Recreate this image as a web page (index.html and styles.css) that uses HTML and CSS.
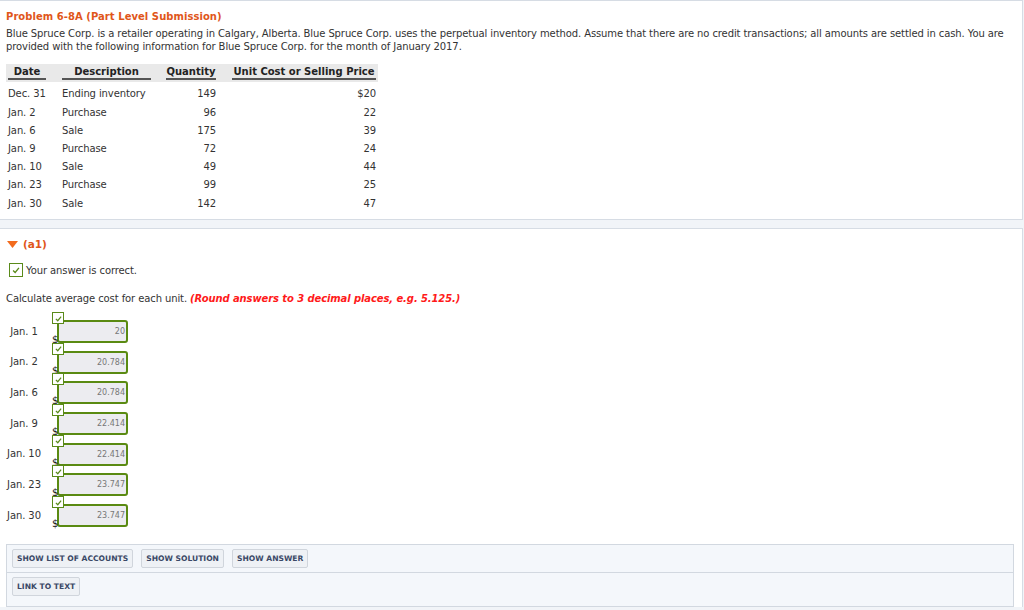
FILE: index.html
```html
<!DOCTYPE html>
<html>
<head>
<meta charset="utf-8">
<link rel="stylesheet" href="styles.css">
</head>
<body>
<div class="page">
  <section class="panel problem">
    <h1 class="title">Problem 6-8A (Part Level Submission)</h1>
    <p class="desc">Blue Spruce Corp. is a retailer operating in Calgary, Alberta. Blue Spruce Corp. uses the perpetual inventory method. Assume that there are no credit transactions; all amounts are settled in cash. You are provided with the following information for Blue Spruce Corp. for the month of January 2017.</p>
    <table class="data">
      <colgroup>
        <col class="w-date"><col class="w-desc"><col class="w-qty"><col class="w-cost">
      </colgroup>
      <thead>
        <tr>
          <th class="c1"><span>Date</span></th>
          <th class="c2"><span>Description</span></th>
          <th class="c3"><span>Quantity</span></th>
          <th class="c4"><span>Unit Cost or Selling Price</span></th>
        </tr>
      </thead>
      <tbody>
        <tr><td class="c1">Dec. 31</td><td class="c2">Ending inventory</td><td class="c3 num">149</td><td class="c4 num">$20</td></tr>
        <tr><td class="c1">Jan. 2</td><td class="c2">Purchase</td><td class="c3 num">96</td><td class="c4 num">22</td></tr>
        <tr><td class="c1">Jan. 6</td><td class="c2">Sale</td><td class="c3 num">175</td><td class="c4 num">39</td></tr>
        <tr><td class="c1">Jan. 9</td><td class="c2">Purchase</td><td class="c3 num">72</td><td class="c4 num">24</td></tr>
        <tr><td class="c1">Jan. 10</td><td class="c2">Sale</td><td class="c3 num">49</td><td class="c4 num">44</td></tr>
        <tr><td class="c1">Jan. 23</td><td class="c2">Purchase</td><td class="c3 num">99</td><td class="c4 num">25</td></tr>
        <tr><td class="c1">Jan. 30</td><td class="c2">Sale</td><td class="c3 num">142</td><td class="c4 num">47</td></tr>
      </tbody>
    </table>
  </section>

  <section class="panel part">
    <div class="part-head">
      <svg class="tri" width="11" height="7" viewBox="0 0 11 7"><polygon points="0,0 11,0 5.5,7" fill="#f26b1d"/></svg>
      <span>(a1)</span>
    </div>
    <div class="correct">
      <span class="chk big"><svg viewBox="0 0 12 12" width="10" height="10"><polyline points="2.5,6.5 5,9 9.5,3.5" fill="none" stroke="#5a8a1a" stroke-width="1.6"/></svg></span>
      <span>Your answer is correct.</span>
    </div>
    <p class="instr">Calculate average cost for each unit. <em>(Round answers to 3 decimal places, e.g. 5.125.)</em></p>

    <div class="answers">
      <div class="arow"><span class="alabel">Jan. 1</span><span class="acell"><span class="chk small"><svg viewBox="0 0 12 12" width="9" height="9"><polyline points="2.5,6.5 5,9 9.5,3.5" fill="none" stroke="#5a8a1a" stroke-width="1.6"/></svg></span><span class="dollar">$</span><span class="ainput">20</span></span></div>
      <div class="arow"><span class="alabel">Jan. 2</span><span class="acell"><span class="chk small"><svg viewBox="0 0 12 12" width="9" height="9"><polyline points="2.5,6.5 5,9 9.5,3.5" fill="none" stroke="#5a8a1a" stroke-width="1.6"/></svg></span><span class="dollar">$</span><span class="ainput">20.784</span></span></div>
      <div class="arow"><span class="alabel">Jan. 6</span><span class="acell"><span class="chk small"><svg viewBox="0 0 12 12" width="9" height="9"><polyline points="2.5,6.5 5,9 9.5,3.5" fill="none" stroke="#5a8a1a" stroke-width="1.6"/></svg></span><span class="dollar">$</span><span class="ainput">20.784</span></span></div>
      <div class="arow"><span class="alabel">Jan. 9</span><span class="acell"><span class="chk small"><svg viewBox="0 0 12 12" width="9" height="9"><polyline points="2.5,6.5 5,9 9.5,3.5" fill="none" stroke="#5a8a1a" stroke-width="1.6"/></svg></span><span class="dollar">$</span><span class="ainput">22.414</span></span></div>
      <div class="arow"><span class="alabel">Jan. 10</span><span class="acell"><span class="chk small"><svg viewBox="0 0 12 12" width="9" height="9"><polyline points="2.5,6.5 5,9 9.5,3.5" fill="none" stroke="#5a8a1a" stroke-width="1.6"/></svg></span><span class="dollar">$</span><span class="ainput">22.414</span></span></div>
      <div class="arow"><span class="alabel">Jan. 23</span><span class="acell"><span class="chk small"><svg viewBox="0 0 12 12" width="9" height="9"><polyline points="2.5,6.5 5,9 9.5,3.5" fill="none" stroke="#5a8a1a" stroke-width="1.6"/></svg></span><span class="dollar">$</span><span class="ainput">23.747</span></span></div>
      <div class="arow"><span class="alabel">Jan. 30</span><span class="acell"><span class="chk small"><svg viewBox="0 0 12 12" width="9" height="9"><polyline points="2.5,6.5 5,9 9.5,3.5" fill="none" stroke="#5a8a1a" stroke-width="1.6"/></svg></span><span class="dollar">$</span><span class="ainput">23.747</span></span></div>
    </div>

    <div class="toolbox">
      <div class="trow">
        <span class="btn">SHOW LIST OF ACCOUNTS</span>
        <span class="btn">SHOW SOLUTION</span>
        <span class="btn">SHOW ANSWER</span>
      </div>
      <div class="trow last">
        <span class="btn">LINK TO TEXT</span>
      </div>
    </div>
  </section>
</div>
</body>
</html>
```

FILE: styles.css
```css
* { box-sizing: border-box; }
html, body { margin: 0; padding: 0; }
body {
  background: #f1f4f8;
  font-family: "DejaVu Sans", Verdana, sans-serif;
  font-size: 10px;
  letter-spacing: -0.1px;
  color: #333;
  width: 1024px;
  height: 610px;
  overflow: hidden;
}
.page {
  display: flex;
  flex-direction: column;
  gap: 8px;
}
.panel {
  background: #fff;
  border: 1px solid #d6dce4;
  border-left: none;
  width: 1023px;
}
.problem {
  padding: 9px 6px 8px 6px;
  height: 220px;
}
.title {
  margin: 0;
  font-size: 10px;
  font-weight: bold;
  color: #e0561a;
  line-height: 14px;
  letter-spacing: 0.05px;
}
.desc {
  margin: 3px 0 0 0;
  line-height: 13px;
  color: #333;
}
.data {
  border-collapse: collapse;
  table-layout: fixed;
  width: 372px;
  margin-top: 11px;
  white-space: nowrap;
}
.w-date { width: 50px; }
.w-desc { width: 101px; }
.w-qty { width: 63px; }
.w-cost { width: 158px; }
.data thead tr { background: #e9e9e9; }
.data th {
  font-weight: bold;
  padding-top: 2px;
  padding-bottom: 2px;
  height: 17px;
  color: #222;
  letter-spacing: 0;
}
.data th span {
  display: block;
  border-bottom: 2px solid #555;
  line-height: 12px;
}
.c1 { padding-left: 2px; padding-right: 10px; }
.c2 { padding-left: 6px; padding-right: 6px; }
.c3 { padding-left: 9px; padding-right: 4px; }
.c4 { padding-left: 12px; padding-right: 2px; }
.data td {
  height: 18.2px;
  vertical-align: middle;
  color: #333;
}
.data tbody tr:first-child td { height: 21px; padding-top: 3px; }
.data td.num { text-align: right; }

.part {
  flex: 1;
  height: 382px;
  padding: 7px 6px 0 6px;
  border-bottom: none;
}
.part-head {
  display: flex;
  align-items: center;
  gap: 5px;
  font-weight: bold;
  color: #e0561a;
  font-size: 10.5px;
  height: 16px;
  padding-left: 1px;
}
.correct {
  display: flex;
  align-items: center;
  gap: 3px;
  margin-top: 11px;
  padding-left: 3px;
}
.chk {
  display: inline-flex;
  align-items: center;
  justify-content: center;
  border: 1px solid #5a8a1a;
  background: #fff;
}
.chk.big { width: 14px; height: 14px; }
.chk.small { width: 12px; height: 12px; }
.instr {
  margin: 15px 0 0 0;
  line-height: 14px;
}
.instr em {
  font-style: italic;
  font-weight: bold;
  color: #ff1a1a;
}
.answers {
  margin-top: 13px;
  display: flex;
  flex-direction: column;
  gap: 6.7px;
}
.arow {
  display: flex;
  align-items: center;
  height: 24px;
}
.alabel {
  width: 36px;
  margin-right: 10px;
  text-align: center;
  color: #333;
}
.acell {
  position: relative;
  display: flex;
  align-items: flex-end;
  height: 24px;
  padding-left: 5px;
}
.acell .chk.small {
  position: absolute;
  left: 0;
  top: -7px;
}
.dollar {
  position: absolute;
  left: 0;
  bottom: -2px;
  font-size: 10px;
  color: #222;
}
.ainput {
  display: block;
  width: 71px;
  height: 23px;
  border: 2px solid #5a8a12;
  border-radius: 3px;
  background: #ececf0;
  text-align: right;
  font-size: 8px;
  color: #777;
  line-height: 19px;
  padding-right: 1px;
  letter-spacing: 0;
}
.toolbox {
  margin-top: 17px;
  width: 1008px;
  background: #f4f7fb;
  border: 1px solid #d2d8e0;
}
.trow {
  display: flex;
  gap: 8px;
  padding: 4px 5px 4px 5px;
  border-bottom: 1px solid #d2d8e0;
}
.trow.last {
  border-bottom: none;
  padding-bottom: 10px;
}
.btn {
  display: inline-block;
  background: #eef1f5;
  border: 1px solid #d0d5dc;
  border-radius: 2px;
  font-size: 7.6px;
  font-weight: bold;
  color: #3a4866;
  padding: 4px 4px;
  line-height: 9px;
  letter-spacing: 0;
}
```
